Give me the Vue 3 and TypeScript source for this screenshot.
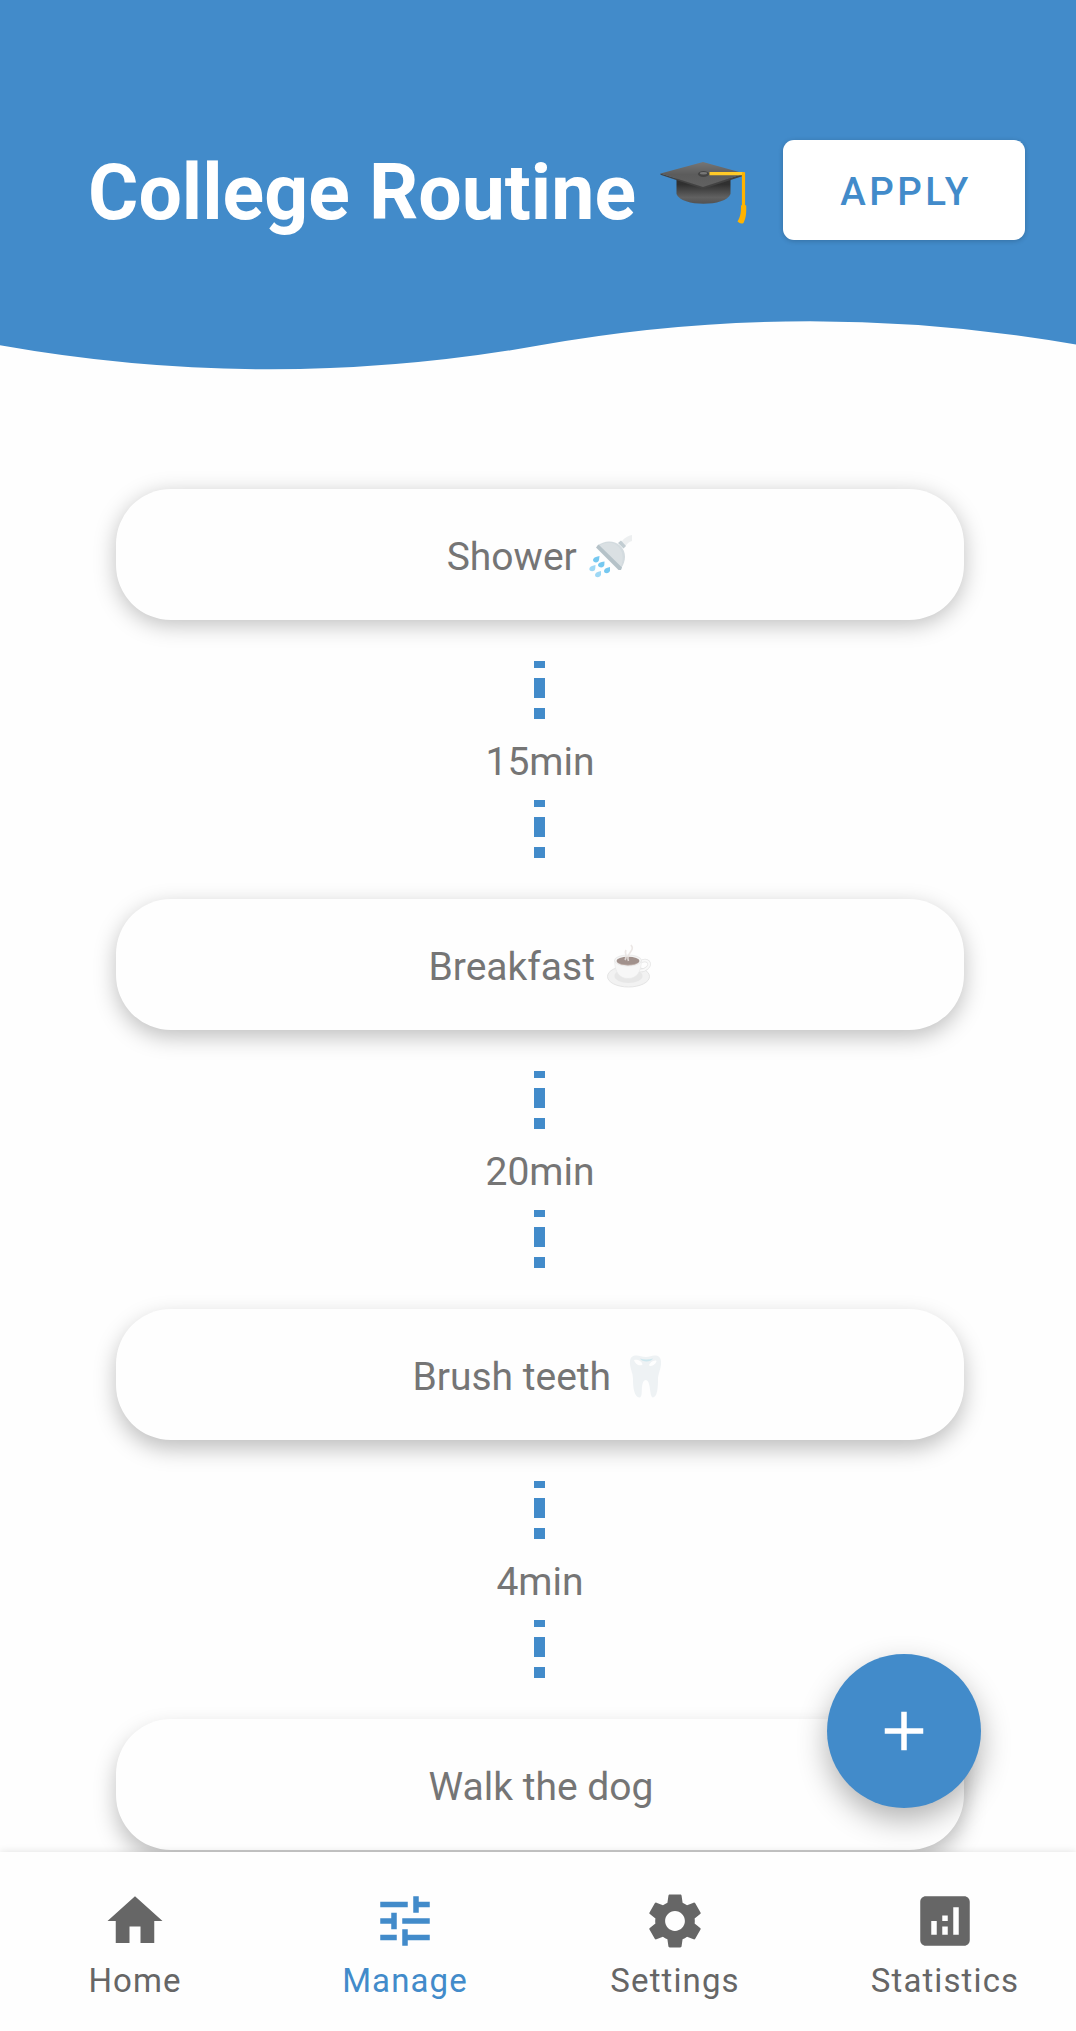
<script setup lang="ts">
interface Task {
  name: string
  emoji?: 'shower' | 'coffee' | 'tooth'
  wait?: string
}

interface Tab {
  label: string
  icon: string
  active?: boolean
}

const tasks: Task[] = [
  { name: 'Shower', emoji: 'shower', wait: '15min' },
  { name: 'Breakfast', emoji: 'coffee', wait: '20min' },
  { name: 'Brush teeth', emoji: 'tooth', wait: '4min' },
  { name: 'Walk the dog' },
]

const tabs: Tab[] = [
  { label: 'Home', icon: 'M10 20v-6h4v6h5v-8h3L12 3 2 12h3v8z' },
  {
    label: 'Manage',
    icon: 'M3 17v2h6v-2H3zM3 5v2h10V5H3zm10 16v-2h8v-2h-8v-2h-2v6h2zM7 9v2H3v2h4v2h2V9H7zm14 4v-2H11v2h10zm-6-4h2V7h4V5h-4V3h-2v6z',
    active: true,
  },
  {
    label: 'Settings',
    icon: 'M19.14 12.94c.04-.3.06-.61.06-.94 0-.32-.02-.64-.07-.94l2.03-1.58c.18-.14.23-.41.12-.61l-1.92-3.32c-.12-.22-.37-.29-.59-.22l-2.39.96c-.5-.38-1.03-.7-1.62-.94l-.36-2.54c-.04-.24-.24-.41-.48-.41h-3.84c-.24 0-.43.17-.47.41l-.36 2.54c-.59.24-1.13.57-1.62.94l-2.39-.96c-.22-.08-.47 0-.59.22L2.74 8.87c-.12.21-.08.47.12.61l2.03 1.58c-.05.3-.09.63-.09.94s.02.64.07.94l-2.03 1.58c-.18.14-.23.41-.12.61l1.92 3.32c.12.22.37.29.59.22l2.39-.96c.5.38 1.03.7 1.62.94l.36 2.54c.05.24.24.41.48.41h3.84c.24 0 .44-.17.47-.41l.36-2.54c.59-.24 1.13-.56 1.62-.94l2.39.96c.22.08.47 0 .59-.22l1.92-3.32c.12-.22.07-.47-.12-.61l-2.01-1.58zM12 15.6c-1.98 0-3.6-1.62-3.6-3.6s1.62-3.6 3.6-3.6 3.6 1.62 3.6 3.6-1.62 3.6-3.6 3.6z',
  },
  {
    label: 'Statistics',
    icon: 'M19 3H5c-1.1 0-2 .9-2 2v14c0 1.1.9 2 2 2h14c1.1 0 2-.9 2-2V5c0-1.1-.9-2-2-2zM9 17H7v-5h2v5zm4 0h-2v-3h2v3zm0-5h-2v-2h2v2zm4 5h-2V7h2v10z',
  },
]
</script>

<template>
  <div class="screen">
    <header class="header">
      <svg class="wave" width="1080" height="370" viewBox="0 0 1080 370">
        <path d="M0 0H1080V345.3Q810 297.3 540 345.3T0 345.3Z" fill="#428bca" />
      </svg>
      <div class="bar">
        <h1 class="title">College Routine</h1>
        <svg class="cap" width="96" height="96" viewBox="0 0 96 96">
          <defs>
            <linearGradient id="capBase" x1="0" y1="0" x2="0" y2="1">
              <stop offset="0.25" stop-color="#303030" />
              <stop offset="0.75" stop-color="#616161" />
              <stop offset="1" stop-color="#525252" />
            </linearGradient>
            <linearGradient id="capTop" x1="0" y1="0" x2="0" y2="1">
              <stop offset="0" stop-color="#757575" />
              <stop offset="0.5" stop-color="#5c5c5c" />
              <stop offset="1" stop-color="#616161" />
            </linearGradient>
          </defs>
          <path d="M21.500 31V47C26 60 71 60 75.500 47V31Z" fill="url(#capBase)" />
          <path d="M5.500 26.500 48 39.500 89.500 26.500V28.500L48 42 5.500 27.800Z" fill="#424242" />
          <path d="M5.500 26.500 48 15 89.500 26.500 48 40Z" fill="url(#capTop)" />
          <ellipse cx="48.500" cy="27" rx="5.600" ry="2.900" fill="#444" />
          <ellipse cx="48.500" cy="26.200" rx="3.600" ry="1.200" fill="#777" />
          <path d="M54.500 26.700H88.500" stroke="#ffca28" stroke-width="3.200" />
          <path d="M88.500 25.200V59" stroke="#ffb300" stroke-width="3.200" />
          <path d="M86 58.500Q88.500 57 91.200 58.500C91.500 66 91 71 88.500 76Q85.500 77.500 82.500 74.500C86 69 86 64 86 58.500Z" fill="#ffb300" />
        </svg>
        <button class="apply" type="button">APPLY</button>
      </div>
    </header>

    <main class="list">
      <template v-for="(task, i) in tasks" :key="task.name">
        <div class="card" :style="{ '--depth': i }">
          <span>{{ task.name }}</span>
          <svg v-if="task.emoji === 'shower'" class="emoji" width="48" height="48" viewBox="0 0 48 48">
            <path d="M34 9C37 6 39 3.500 45 2V8C42 8.500 40 11 38 13.500Z" fill="#dfe4e6" />
            <path d="M31 10 34 7.500 39 13 36.500 15.500Z" fill="#90a4ae" />
            <path d="M10 13C17 7 27 7 33 12.500 40 19 39 28 34 35.500Z" fill="#b0bec5" />
            <path d="M12 13C20 8 27 9 31.500 14 36 18 37 26 34 33.500Z" fill="#bcc8ce" />
            <path d="M9 14.500 11.500 11.500 35 34.500 34 37 31.500 37Z" fill="#78909c" />
            <g fill="#039be5">
              <path d="M12.500 23Q6 24 6 27C6 30 11.500 30.500 12 27Z" />
              <path d="M17.500 28.500Q11 29 11 32C11 35 17 35.500 17.300 32Z" />
              <path d="M23 34Q17 35 17 38C17 41 22.500 41 23 37.500Z" />
            </g>
            <g fill="#4fb9ee">
              <path d="M8.500 32Q2.300 33 2.300 36C2.300 39 7.800 39 8.200 36Z" />
              <path d="M14 38Q8 39 8 42C8 45 13.500 45 14 41.500Z" />
            </g>
          </svg>
          <svg v-else-if="task.emoji === 'coffee'" class="emoji" width="48" height="48" viewBox="0 0 48 48">
            <ellipse cx="23.500" cy="33.500" rx="21" ry="10.500" fill="#e8e8e8" stroke="#c6c6c6" stroke-width="0.8" />
            <ellipse cx="23.500" cy="33" rx="14" ry="7" fill="#d5d5d5" />
            <path d="M35 19C43 15 47 21 42 25Q39 28 34 27.500" fill="none" stroke="#d0d0d0" stroke-width="3.400" />
            <path d="M35 19C43 15 47 21 42 25Q39 28 34 27.500" fill="none" stroke="#f5f5f5" stroke-width="2" />
            <path d="M9.500 17.500C10 29 14 35.500 23 35.500S36 29 36.500 17.500Z" fill="#f2f2f2" stroke="#d7d7d7" stroke-width="0.600" />
            <ellipse cx="23" cy="17.500" rx="13.500" ry="5.500" fill="#eee" stroke="#d0d0d0" stroke-width="0.700" />
            <ellipse cx="23" cy="18" rx="11.500" ry="4.200" fill="#54362d" />
            <path d="M12 19C16 22.500 30 22.500 34 19 31 23.500 15 23.500 12 19Z" fill="#8d6e63" />
            <path d="M26 2C31 8 20 10 23.500 18M21 7C19 10 23 13 20 17" fill="none" stroke="#d7ccc8" stroke-opacity="0.850" stroke-width="1.600" />
          </svg>
          <svg v-else-if="task.emoji === 'tooth'" class="emoji" width="48" height="48" viewBox="0 0 48 48">
            <path d="M24 4C19 3.800 17 2 13 2.500 8 3 7.300 8 8.500 14 9.500 19 11 21 11 26 11 34 12 44 17.500 44.500 21 44 19 35 20.500 31 21.500 25.500 26 25.500 27 31 28.500 35 28 44 31 44.500 35.500 44 36 33 36 26 36 21 38.500 17 39 11 39.500 5 37 3 34 2.500 30 2 28 4 24 4Z" fill="#e1e8ed" />
            <path d="M18 5.500Q24 7.500 31 5.500C29 9.500 20 9.500 18 5.500Z" fill="#a5d5e2" />
            <path d="M12 7C15 6 20 8 20.500 11.500 17 14 13 10.500 12 7ZM34 7.500C31 7 27 10.500 27 12.500 30 14 34 11 34.500 8Z" fill="#fff" />
          </svg>
        </div>
        <div v-if="task.wait" class="connector">
          <div class="dashes"><i></i><i></i><i></i></div>
          <span class="wait">{{ task.wait }}</span>
          <div class="dashes"><i></i><i></i><i></i></div>
        </div>
      </template>
    </main>

    <nav class="tabs">
      <a v-for="tab in tabs" :key="tab.label" class="tab" :class="{ active: tab.active }">
        <svg width="66" height="66" viewBox="0 0 24 24"><path :d="tab.icon" fill="currentColor" /></svg>
        <span>{{ tab.label }}</span>
      </a>
    </nav>

    <button class="fab" type="button" aria-label="Add">
      <svg width="66" height="66" viewBox="0 0 24 24"><path d="M19 13h-6v6h-2v-6H5v-2h6V5h2v6h6v2z" fill="#fff" /></svg>
    </button>
  </div>
</template>

<style>
body {
  margin: 0;
  background: #fefefe;
}
</style>

<style scoped>
.screen {
  position: relative;
  display: flex;
  flex-direction: column;
  width: 1076px;
  height: 2031px;
  overflow: hidden;
  background: #fefefe;
  font-family: Roboto, "Liberation Sans", sans-serif;
}

.header {
  display: grid;
  flex: none;
  width: 1080px;
  height: 370px;
}

.wave,
.bar {
  grid-area: 1 / 1;
}

.bar {
  display: flex;
  align-items: flex-start;
  height: 100px;
  margin-top: 140px;
  padding-left: 88px;
}

.title {
  width: 567px;
  margin: 0;
  padding-top: 8px;
  color: #fff;
  font-size: 77px;
  font-weight: 700;
  line-height: 90px;
  white-space: nowrap;
}

.cap {
  flex: none;
  width: 96px;
  margin: 7px 32px 0 0;
}

.apply {
  flex: none;
  width: 242px;
  height: 100px;
  padding: 3px 0 0 4px;
  border: 0;
  border-radius: 11px;
  background: #fff;
  box-shadow: 0 1px 5px rgba(0, 0, 0, 0.2);
  color: #428bca;
  font-family: inherit;
  font-size: 38.5px;
  font-weight: 500;
  letter-spacing: 3.44px;
}

.list {
  display: flex;
  flex: 1;
  flex-direction: column;
  align-items: center;
  width: 1080px;
  min-height: 0;
  padding-top: 119px;
  box-sizing: border-box;
  overflow: hidden;
  color: #757575;
  font-size: 39px;
}

.card {
  display: flex;
  flex: none;
  align-items: center;
  justify-content: center;
  width: 848px;
  height: 131px;
  padding: 5px 0 0 2px;
  box-sizing: border-box;
  border-radius: 55px;
  background: #fefefe;
  box-shadow: 0 calc(5px + var(--depth) * 2px) 22px rgba(0, 0, 0, 0.25);
}

.emoji {
  flex: none;
  margin: -1px 0 0 10.5px;
  opacity: 0.54;
}

.connector {
  display: flex;
  flex: none;
  flex-direction: column;
  align-items: center;
  padding: 41px 0;
}

.wait {
  height: 81px;
  padding-top: 5px;
  box-sizing: border-box;
  line-height: 76px;
}

.dashes {
  display: flex;
  flex-direction: column;
  gap: 10px;
  margin-right: 1px;
}

.dashes i {
  width: 11px;
  height: 7px;
  background: #428bca;
}

.dashes i:nth-child(2) {
  height: 20px;
}

.dashes i:nth-child(3) {
  height: 11px;
}

.tabs {
  position: relative;
  display: grid;
  flex: none;
  grid-template-columns: repeat(4, 270px);
  height: 179px;
  background: #fefefe;
  box-shadow: 0 0 8px rgba(0, 0, 0, 0.12);
}

.tab {
  display: flex;
  flex-direction: column;
  align-items: center;
  padding-top: 35.75px;
  color: #666;
  font-size: 33px;
  line-height: 38px;
  letter-spacing: 1.1px;
}

.tab span {
  margin-top: 8px;
}

.tab.active {
  color: #428bca;
}

.fab {
  position: absolute;
  top: 1654px;
  left: 827px;
  display: flex;
  align-items: center;
  justify-content: center;
  width: 154px;
  height: 154px;
  padding: 0;
  border: 0;
  border-radius: 50%;
  background: #428bca;
  box-shadow: 0 12px 30px rgba(0, 0, 0, 0.3);
}
</style>
